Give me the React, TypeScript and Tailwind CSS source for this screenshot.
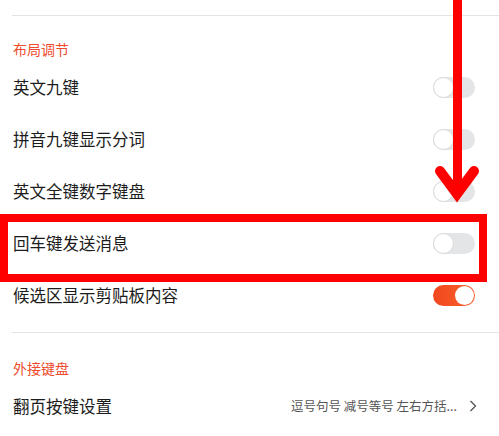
const font = { fontFamily: '"Noto Sans CJK SC", "Noto Sans", sans-serif' };

function Toggle({ on }: { on?: boolean }) {
  if (on) {
    return (
      <div className="relative w-[42px] h-[21px] rounded-full bg-gradient-to-r from-[#f2471f] to-[#f7602d]">
        <div className="absolute right-[1px] top-[1px] w-[19px] h-[19px] rounded-full bg-white" />
      </div>
    );
  }
  return (
    <div className="relative w-[42px] h-[21px] rounded-full bg-[#e4e5e7]">
      <div className="absolute left-0 top-0 w-[21px] h-[21px] rounded-full bg-white border border-[#d8d9db]" />
    </div>
  );
}

function Row({ label, on }: { label: string; on?: boolean }) {
  return (
    <div className="h-[52px] flex items-center justify-between pl-[13px] pr-[24px]">
      <span className="text-[16.5px] text-[#1c1c1c]">{label}</span>
      <Toggle on={on} />
    </div>
  );
}

export default function App() {
  const rows = [
    { label: "英文九键" },
    { label: "拼音九键显示分词" },
    { label: "英文全键数字键盘" },
    { label: "回车键发送消息" },
    { label: "候选区显示剪贴板内容", on: true },
  ];

  return (
    <div className="relative w-[499px] h-[436px] overflow-hidden bg-white" style={font}>
      <div className="h-[15px]" />
      <div className="ml-[12px] border-t border-[#e4e4e4]" />
      <div className="h-[45px] pt-[23px] pl-[13px] text-[14px] leading-[20px] text-[#ee4a2c]">布局调节</div>
      <div className="flex flex-col">
        {rows.map((r) => (
          <Row key={r.label} label={r.label} on={r.on} />
        ))}
      </div>
      <div className="h-[11px]" />
      <div className="ml-[12px] border-t border-[#e4e4e4]" />
      <div className="h-[50px] pt-[25px] pl-[13px] text-[14px] leading-[20px] text-[#ee4a2c]">外接键盘</div>
      <div className="h-[46px] flex items-center justify-between pl-[13px] pr-[22px]">
        <span className="text-[16.5px] text-[#1c1c1c]">翻页按键设置</span>
        <div className="flex items-center gap-[12px] text-[12.5px] text-[#555]">
          <span>逗号句号 减号等号 左右方括...</span>
          <svg width="8" height="12" viewBox="0 0 8 12" fill="none">
            <path d="M1.5 1 L6.5 6 L1.5 11" stroke="#555" strokeWidth="1.3" />
          </svg>
        </div>
      </div>

      {/* annotation overlay */}
      <div className="absolute left-0 top-[214px] w-[487px] h-[68px] border-[8px] border-[#ff0000]" />
      <svg className="absolute left-0 top-0" width="499" height="220" viewBox="0 0 499 220">
        <rect x="453" y="0" width="9" height="190" fill="#ff0000" />
        <path d="M440 171 L457 194 L474 171" stroke="#ff0000" strokeWidth="10" fill="none" strokeLinecap="round" strokeLinejoin="miter" />
      </svg>
    </div>
  );
}
